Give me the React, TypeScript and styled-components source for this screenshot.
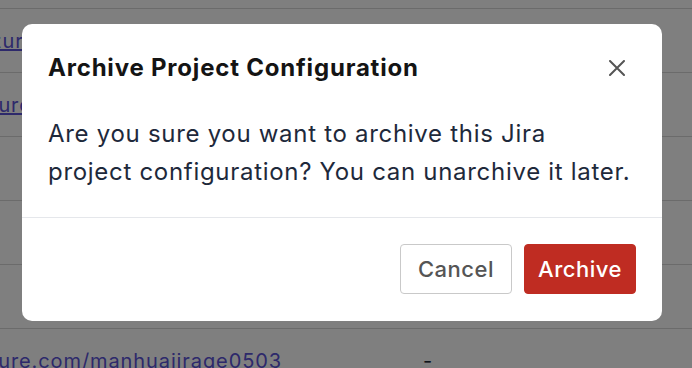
import React from "react";
import styled, { createGlobalStyle } from "styled-components";

const GlobalStyle = createGlobalStyle`
  html, body {
    margin: 0;
    padding: 0;
    height: 100%;
  }
  body {
    font-family: Inter, "Noto Sans", "Liberation Sans", sans-serif;
    background: #ffffff;
  }
`;

const rows = [
  { link: "https://azure.com/manhuajirage0501", value: "" },
  { link: "https://azure.com/manhuajirage0502", value: "" },
  { link: "", value: "" },
  { link: "", value: "" },
  { link: "", value: "" },
  { link: "https://azure.com/manhuajirage0503", value: "-" },
];

const Page = styled.div`
  position: relative;
  width: 692px;
  height: 368px;
  overflow: hidden;
`;

const Table = styled.div`
  display: flex;
  flex-direction: column;
  margin-top: 8px;
`;

const Row = styled.div`
  display: grid;
  grid-template-columns: 282px 141px 1fr;
  align-items: center;
  height: 63px;
  border-top: 1px solid #d6d6d6;
  font-size: 20px;
  letter-spacing: 0.9px;
  color: #1f2937;
`;

const LinkCell = styled.div`
  display: flex;
  justify-content: flex-end;
  min-width: 0;
`;

const Link = styled.a`
  flex-shrink: 0;
  color: #5a52d6;
  text-decoration: underline;
  white-space: nowrap;
`;

const Overlay = styled.div`
  position: absolute;
  inset: 0;
  background: rgba(0, 0, 0, 0.5);
  display: flex;
  align-items: flex-start;
  justify-content: center;
  padding: 24px 8px 0 0;
`;

const Dialog = styled.div`
  width: 640px;
  background: #ffffff;
  border-radius: 10px;
  display: flex;
  flex-direction: column;
`;

const Header = styled.div`
  display: flex;
  align-items: center;
  justify-content: space-between;
  padding: 28px 26px 0 26px;
`;

const Title = styled.h2`
  margin: 0;
  font-size: 24px;
  font-weight: 700;
  letter-spacing: 0.8px;
  color: #141414;
  line-height: 32px;
`;

const CloseButton = styled.button`
  border: none;
  background: transparent;
  padding: 0;
  width: 38px;
  height: 32px;
  display: flex;
  align-items: center;
  justify-content: center;
  color: #555555;
  cursor: pointer;
`;

const Body = styled.p`
  margin: 0;
  padding: 31px 16px 27px 26px;
  font-size: 24px;
  letter-spacing: 0.7px;
  line-height: 37.5px;
  color: #1e293b;
  white-space: nowrap;
`;

const Footer = styled.div`
  display: flex;
  justify-content: flex-end;
  gap: 12px;
  padding: 26px 26px 27px 26px;
  border-top: 1px solid #e5e7eb;
`;

const Button = styled.button<{ $variant: "primary" | "secondary" }>`
  min-width: 112px;
  height: 50px;
  padding: 0 12px;
  font-family: inherit;
  font-size: 22px;
  font-weight: 500;
  letter-spacing: 0.5px;
  border-radius: 4px;
  cursor: pointer;
  border: 1px solid ${(p) => (p.$variant === "primary" ? "#bf2c22" : "#c9c9c9")};
  background: ${(p) => (p.$variant === "primary" ? "#bf2c22" : "#ffffff")};
  color: ${(p) => (p.$variant === "primary" ? "#ffffff" : "#555555")};
`;

const App = () => {
  return (
    <Page>
      <GlobalStyle />
      <Table>
        {rows.map((row, i) => (
          <Row key={i}>
            <LinkCell>{row.link && <Link href="#">{row.link}</Link>}</LinkCell>
            <span />
            <span>{row.value}</span>
          </Row>
        ))}
      </Table>
      <Overlay>
        <Dialog>
          <Header>
            <Title>Archive Project Configuration</Title>
            <CloseButton aria-label="Close">
              <svg width="16" height="16" viewBox="0 0 16 16" fill="none">
                <path
                  d="M1 1L15 15M15 1L1 15"
                  stroke="currentColor"
                  strokeWidth="2"
                  strokeLinecap="round"
                />
              </svg>
            </CloseButton>
          </Header>
          <Body>
            Are you sure you want to archive this Jira
            <br />
            project configuration? You can unarchive it later.
          </Body>
          <Footer>
            <Button $variant="secondary">Cancel</Button>
            <Button $variant="primary">Archive</Button>
          </Footer>
        </Dialog>
      </Overlay>
    </Page>
  );
};

export default App;
